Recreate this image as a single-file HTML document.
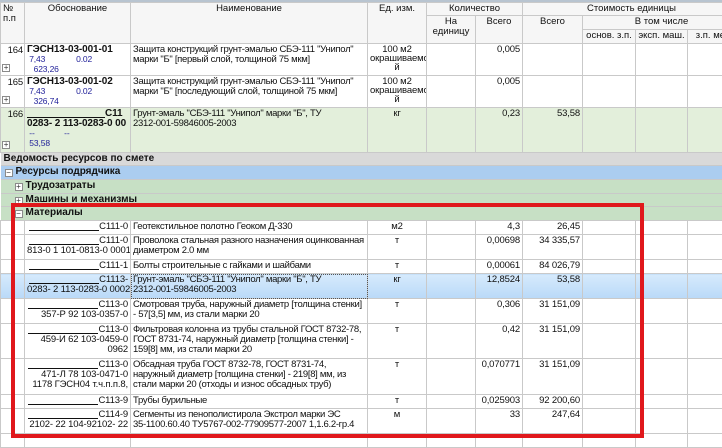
<!DOCTYPE html>
<html><head><meta charset="utf-8"><style>
*{margin:0;padding:0;box-sizing:border-box}
body{width:722px;height:439px;overflow:hidden;background:#fff;font-family:"Liberation Sans","DejaVu Sans",sans-serif;font-size:9.5px;color:#111;position:relative}
table{border-collapse:collapse;table-layout:fixed;position:absolute;left:0;top:2px;width:740px}
td,th{border:1px solid #c9c9c9;vertical-align:top;overflow:hidden;white-space:nowrap;line-height:10px;padding:1px 2px 0;position:relative;letter-spacing:-0.15px}
th{font-weight:normal;background:#f6f6f6;text-align:center;vertical-align:top;padding:1px 2px 0;letter-spacing:0}
.r{text-align:right}.c{text-align:center}
.w{letter-spacing:-0.3px}
.b{font-weight:bold;font-size:10px;letter-spacing:-0.1px}
.s{color:#22229a;font-size:8.5px;line-height:9px}
.g166 td{background:#e3efdb}
.grp td{padding:0 3px;font-weight:bold;font-size:10px;line-height:11px;border-left:none;border-right:none;letter-spacing:0}
.gray td{background:#d9d9d9}
.blue td{background:#abcdf0}
.green td{background:#c7e0c5}
.sel td{background:linear-gradient(#d6eafc,#b9d9f8)}
.u{display:inline-block;width:70px;border-bottom:1px solid #111;height:9px;vertical-align:top}
.pb{display:inline-block;width:8px;height:8px;border:1px solid #8a8a8a;font-size:8px;line-height:6px;text-align:center;color:#333;background:#fff;margin-right:3px;vertical-align:-1px;font-weight:normal}
.pa{position:absolute;left:1px;bottom:3px}
#red{position:absolute;left:11px;top:203px;width:633px;height:235px;border:4px solid #e0181c}
</style></head><body>
<div style="position:absolute;left:0;top:0;width:722px;height:2px;background:#b8c4d0"></div>
<table>
<colgroup><col style="width:24px"><col style="width:106px"><col style="width:237px"><col style="width:59px"><col style="width:49px"><col style="width:47px"><col style="width:60px"><col style="width:53px"><col style="width:52px"><col style="width:53px"></colgroup>
<tr style="height:13px"><th rowspan="3" style="text-align:left">№<br>п.п</th><th rowspan="3">Обоснование</th><th rowspan="3">Наименование</th><th rowspan="3">Ед. изм.</th><th colspan="2">Количество</th><th colspan="4">Стоимость единицы</th></tr>
<tr style="height:14px"><th rowspan="2">На<br>единицу</th><th rowspan="2">Всего</th><th rowspan="2">Всего</th><th colspan="3">В том числе</th></tr>
<tr style="height:14px"><th>основ. з.п.</th><th>эксп. маш.</th><th>з.п. мех.</th></tr>
<tr style="height:32px"><td class="r" style="padding:2px 1px">164<span class="pb pa">+</span></td><td><span class="b">ГЭСН13-03-001-01</span><br><span class="s">&nbsp;7,43&nbsp;&nbsp;&nbsp;&nbsp;&nbsp;&nbsp;&nbsp;&nbsp;&nbsp;&nbsp;&nbsp;&nbsp;&nbsp;&nbsp;0.02<br>&nbsp;&nbsp;&nbsp;623,26</span></td><td class="w">Защита конструкций грунт-эмалью СБЭ-111 "Унипол"<br>марки "Б" [первый слой, толщиной 75 мкм]</td><td class="c" style="line-height:9px">100 м2<br>окрашиваемо<br>й</td><td></td><td class="r">0,005</td><td></td><td></td><td></td><td></td></tr>
<tr style="height:31px"><td class="r" style="padding:2px 1px">165<span class="pb pa">+</span></td><td><span class="b">ГЭСН13-03-001-02</span><br><span class="s">&nbsp;7,43&nbsp;&nbsp;&nbsp;&nbsp;&nbsp;&nbsp;&nbsp;&nbsp;&nbsp;&nbsp;&nbsp;&nbsp;&nbsp;&nbsp;0.02<br>&nbsp;&nbsp;&nbsp;326,74</span></td><td class="w">Защита конструкций грунт-эмалью СБЭ-111 "Унипол"<br>марки "Б" [последующий слой, толщиной 75 мкм]</td><td class="c" style="line-height:9px">100 м2<br>окрашиваемо<br>й</td><td></td><td class="r">0,005</td><td></td><td></td><td></td><td></td></tr>
<tr class="g166" style="height:45px"><td class="r" style="padding:2px 1px">166<span class="pb pa">+</span></td><td class="b"><span class="u" style="width:78px"></span>С11<br>0283- 2 113-0283-0 00<br><span class="s" style="font-weight:normal">&nbsp;--&nbsp;&nbsp;&nbsp;&nbsp;&nbsp;&nbsp;&nbsp;&nbsp;&nbsp;&nbsp;&nbsp;&nbsp;&nbsp;--<br>&nbsp;53,58</span></td><td class="w">Грунт-эмаль "СБЭ-111 "Унипол" марки "Б", ТУ<br>2312-001-59846005-2003</td><td class="c">кг</td><td></td><td class="r">0,23</td><td class="r">53,58</td><td></td><td></td><td></td></tr>
<tr class="grp gray" style="height:13px"><td colspan="10">Ведомость ресурсов по смете</td></tr>
<tr class="grp blue" style="height:14px"><td colspan="10" style="padding-left:4px"><span class="pb">−</span>Ресурсы подрядчика</td></tr>
<tr class="grp green" style="height:14px"><td colspan="10" style="padding-left:14px"><span class="pb">+</span>Трудозатраты</td></tr>
<tr class="grp green" style="height:13px"><td colspan="10" style="padding-left:14px"><span class="pb">+</span>Машины и механизмы</td></tr>
<tr class="grp green" style="height:14px"><td colspan="10" style="padding-left:14px"><span class="pb">−</span>Материалы</td></tr>
<tr style="height:14px"><td></td><td class="r"><span class="u"></span>С111-0</td><td class="w">Геотекстильное полотно Геоком Д-330</td><td class="c">м2</td><td></td><td class="r">4,3</td><td class="r">26,45</td><td></td><td></td><td></td></tr>
<tr style="height:25px"><td></td><td class="r"><span class="u"></span>С111-0<br>813-0 1 101-0813-0 0001</td><td class="w">Проволока стальная разного назначения оцинкованная<br>диаметром 2.0 мм</td><td class="c">т</td><td></td><td class="r">0,00698</td><td class="r">34 335,57</td><td></td><td></td><td></td></tr>
<tr style="height:14px"><td></td><td class="r"><span class="u"></span>С111-1</td><td class="w">Болты строительные с гайками и шайбами</td><td class="c">т</td><td></td><td class="r">0,00061</td><td class="r">84 026,79</td><td></td><td></td><td></td></tr>
<tr class="sel" style="height:25px"><td></td><td class="r"><span class="u"></span>С1113-<br>0283- 2 113-0283-0 0002</td><td class="w" style="outline:1px dotted #555;outline-offset:-1px">Грунт-эмаль "СБЭ-111 "Унипол" марки "Б", ТУ<br>2312-001-59846005-2003</td><td class="c">кг</td><td></td><td class="r">12,8524</td><td class="r">53,58</td><td></td><td></td><td></td></tr>
<tr style="height:25px"><td></td><td class="r"><span class="u"></span>С113-0<br>357-Р 92 103-0357-0</td><td class="w">Смотровая труба, наружный диаметр [толщина стенки]<br>- 57[3,5] мм, из стали марки 20</td><td class="c">т</td><td></td><td class="r">0,306</td><td class="r">31 151,09</td><td></td><td></td><td></td></tr>
<tr style="height:35px"><td></td><td class="r"><span class="u"></span>С113-0<br>459-И 62 103-0459-0<br>0962</td><td class="w">Фильтровая колонна из трубы стальной ГОСТ 8732-78,<br>ГОСТ 8731-74, наружный диаметр [толщина стенки] -<br>159[8] мм, из стали марки 20</td><td class="c">т</td><td></td><td class="r">0,42</td><td class="r">31 151,09</td><td></td><td></td><td></td></tr>
<tr style="height:36px"><td></td><td class="r"><span class="u"></span>С113-0<br>471-Л 78 103-0471-0<br>1178 ГЭСН04 т.ч.п.п.8,</td><td class="w">Обсадная труба ГОСТ 8732-78, ГОСТ 8731-74,<br>наружный диаметр [толщина стенки] - 219[8] мм, из<br>стали марки 20 (отходы и износ обсадных труб)</td><td class="c">т</td><td></td><td class="r">0,070771</td><td class="r">31 151,09</td><td></td><td></td><td></td></tr>
<tr style="height:14px"><td></td><td class="r"><span class="u"></span>С113-9</td><td class="w">Трубы бурильные</td><td class="c">т</td><td></td><td class="r">0,025903</td><td class="r">92 200,60</td><td></td><td></td><td></td></tr>
<tr style="height:25px"><td></td><td class="r"><span class="u"></span>С114-9<br>2102- 22 104-92102- 22</td><td class="w">Сегменты из пенополистирола Экстрол марки ЭС<br>35-1100.60.40 ТУ5767-002-77909577-2007 1,1.6.2-гр.4</td><td class="c">м</td><td></td><td class="r">33</td><td class="r">247,64</td><td></td><td></td><td></td></tr>
<tr style="height:14px"><td></td><td></td><td></td><td></td><td></td><td></td><td></td><td></td><td></td><td></td></tr>
</table>
<div id="red"></div>
</body></html>
